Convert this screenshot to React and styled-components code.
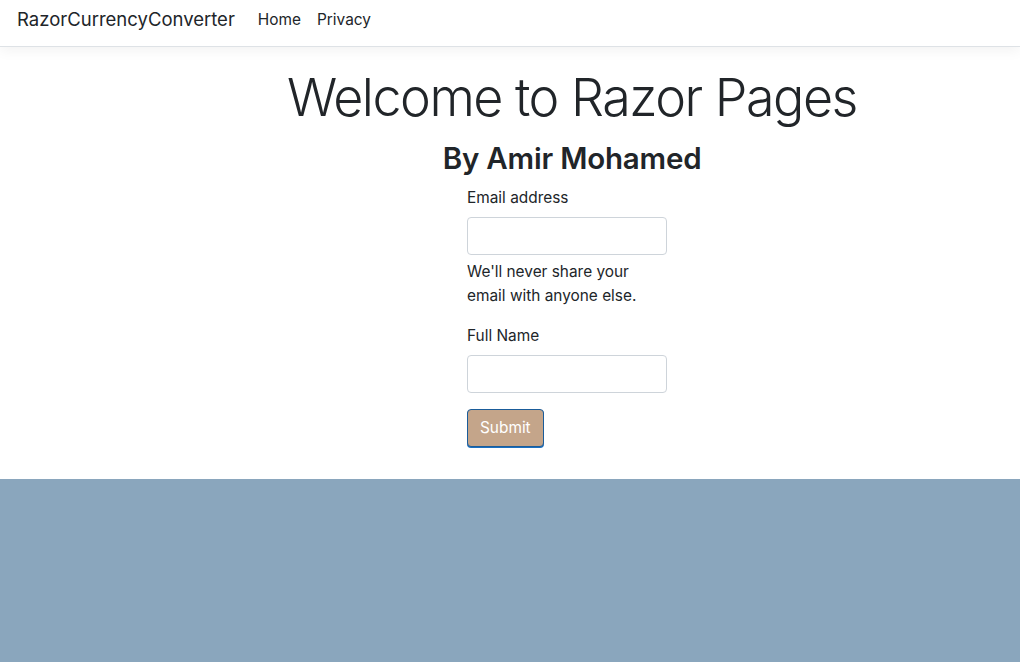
import React from "react";
import styled, { createGlobalStyle } from "styled-components";

const GlobalStyle = createGlobalStyle`
  html, body {
    margin: 0;
    padding: 0;
    height: 100%;
    background: #8aa6bd;
  }
  body {
    font-family: Inter, "Noto Sans", "Liberation Sans", sans-serif;
    color: #212529;
    font-size: 15.4px;
    line-height: 1.5;
  }
  * {
    box-sizing: border-box;
  }
`;

const Navbar = styled.nav`
  display: flex;
  align-items: center;
  height: 47px;
  padding: 0 17px 6px;
  background: #fff;
  border-bottom: 1px solid #dee2e6;
  box-shadow: 0 4px 12px rgba(0, 0, 0, 0.05);
  position: relative;
  z-index: 1;
`;

const Brand = styled.a`
  font-size: 18.5px;
  color: #212529;
  text-decoration: none;
  margin-right: 23px;
`;

const NavLinks = styled.div`
  display: flex;
  gap: 16px;
`;

const NavLink = styled.a`
  color: #212529;
  text-decoration: none;
  font-size: 15.4px;
`;

const Main = styled.main`
  background: #fff;
  height: 432px;
  padding: 20px 0 0 124px;
`;

const Center = styled.div`
  display: flex;
  flex-direction: column;
  align-items: center;
  text-align: center;
`;

const Title = styled.h1`
  font-size: 52px;
  font-weight: 300;
  line-height: 1.2;
  margin: 0;
  letter-spacing: -1.5px;
`;

const Subtitle = styled.h2`
  font-size: 29.5px;
  font-weight: 600;
  line-height: 1.2;
  margin: 12px 0 9px;
  letter-spacing: -0.2px;
`;

const Form = styled.form`
  width: 200px;
  margin-right: 10px;
  text-align: left;
`;

const Group = styled.div`
  margin-bottom: ${(p) => p.gap || 0}px;
`;

const Label = styled.label`
  display: block;
  margin-bottom: 8px;
`;

const Input = styled.input`
  display: block;
  width: 100%;
  height: 38px;
  border: 1px solid #ced4da;
  border-radius: 4px;
  padding: 6px 12px;
  font: inherit;
`;

const Help = styled.div`
  margin-top: 5px;
  line-height: 24px;
`;

const Button = styled.button`
  height: 38px;
  padding: 0 12px;
  background: #c4a58a;
  color: #fff;
  border: 1px solid #1a5c9a;
  border-radius: 4px;
  font: inherit;
  box-shadow: 0 1px 0 #1a6fc0;
`;

export default function App() {
  return (
    <>
      <GlobalStyle />
      <Navbar>
        <Brand href="#">RazorCurrencyConverter</Brand>
        <NavLinks>
          <NavLink href="#">Home</NavLink>
          <NavLink href="#">Privacy</NavLink>
        </NavLinks>
      </Navbar>
      <Main>
        <Center>
          <Title>Welcome to Razor Pages</Title>
          <Subtitle>By Amir Mohamed</Subtitle>
          <Form onSubmit={(e) => e.preventDefault()}>
            <Group gap={16}>
              <Label>Email address</Label>
              <Input type="email" />
              <Help>We'll never share your email with anyone else.</Help>
            </Group>
            <Group gap={16}>
              <Label>Full Name</Label>
              <Input type="text" />
            </Group>
            <Button type="submit">Submit</Button>
          </Form>
        </Center>
      </Main>
    </>
  );
}
